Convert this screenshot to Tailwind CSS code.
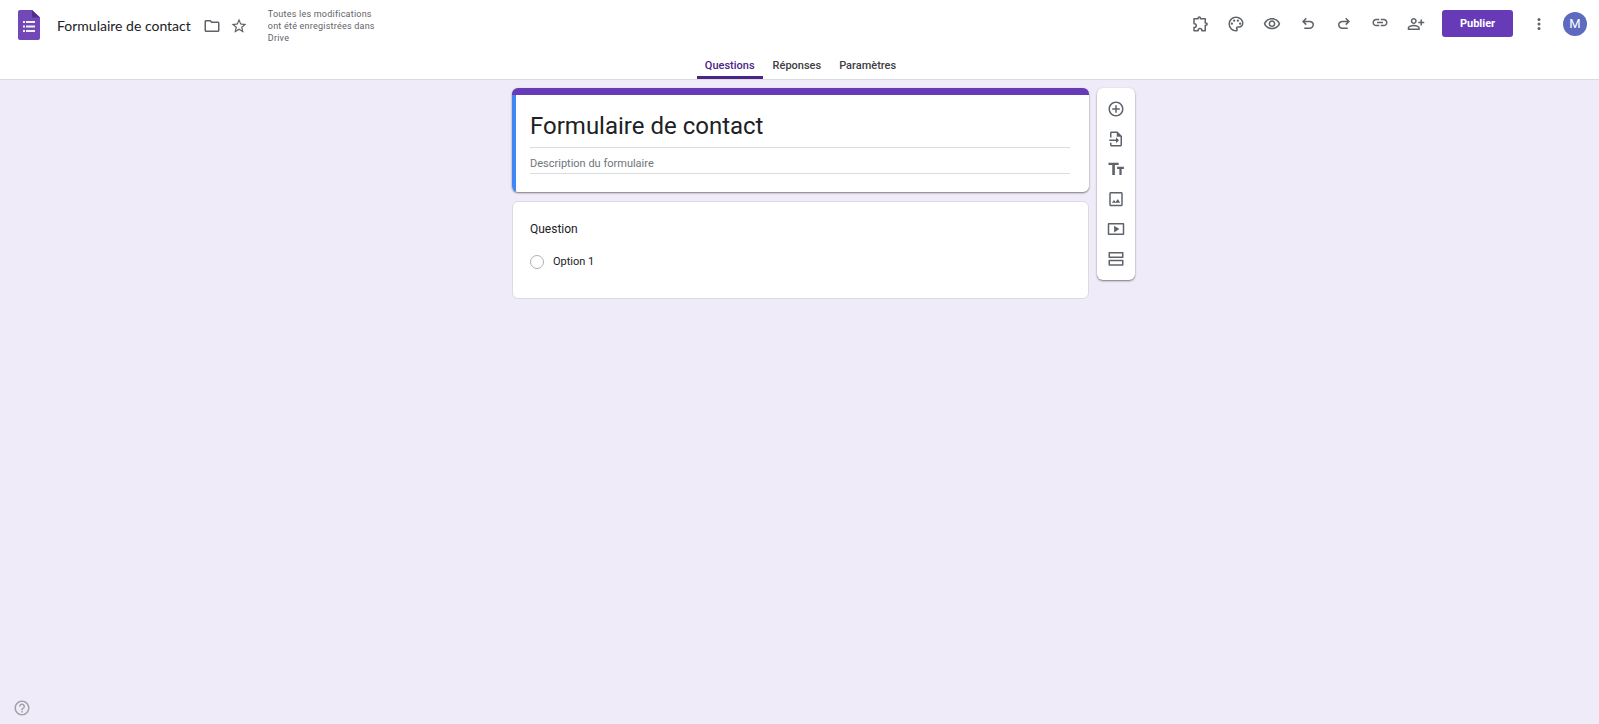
<!DOCTYPE html>
<html lang="fr">

<head>
    <meta charset="UTF-8">
    <meta name="viewport" content="width=device-width, initial-scale=1.0">
    <title>Formulaire de contact</title>
    <script src="https://cdn.jsdelivr.net/npm/@tailwindcss/browser@4"></script>
</head>

<body class="min-h-screen flex flex-col bg-[#f0ebf8] font-['Roboto','Liberation_Sans',sans-serif] text-[#202124]">

    <header class="bg-white border-b border-[#dadce0]">
        <div class="flex justify-between items-start h-[52px] pl-4 pr-3 pt-[10px]">

            <div class="flex items-start">
                <a href="#" aria-label="Accueil Forms" class="px-[2px]">
                    <svg class="w-[22px] h-[30px]" viewBox="0 0 22 30">
                        <path fill="#7248b9" d="M2 0h12l8 7.500v20.500a2 2 0 0 1-2 2H2a2 2 0 0 1-2-2V2a2 2 0 0 1 2-2z" />
                        <path fill="#502d8c" d="M14 0l8 7.500h-6.500a1.500 1.500 0 0 1-1.500-1.500z" />
                        <path fill="#f1f1f1" d="M8 11h9v2H8zM8 15.500h9v2H8zM8 20h9v2H8zM5 11h2v2H5zM5 15.500h2v2H5zM5 20h2v2H5z" />
                    </svg>
                </a>
                <div class="flex items-center h-[31px] pl-[15px]">
                    <h1 class="text-[14px] leading-5 whitespace-nowrap font-['Google_Sans','Lato',sans-serif]">Formulaire de contact</h1>
                    <button type="button" aria-label="Déplacer" class="ml-3 text-[#5f6368]">
                        <svg class="w-[18px] h-[18px]" viewBox="0 0 24 24" fill="currentColor"><path d="M9.170 6l2 2H20v10H4V6h5.170M10 4H4c-1.100 0-1.990.9-1.990 2L2 18c0 1.100.9 2 2 2h16c1.100 0 2-.9 2-2V8c0-1.100-.9-2-2-2h-8l-2-2z" /></svg>
                    </button>
                    <button type="button" aria-label="Suivre" class="ml-[9px] text-[#5f6368]">
                        <svg class="w-[18px] h-[18px]" viewBox="0 0 24 24" fill="currentColor"><path d="M22 9.240l-7.190-.62L12 2 9.190 8.630 2 9.240l5.460 4.730L5.820 21 12 17.270 18.180 21l-1.630-7.030L22 9.240zM12 15.400l-3.760 2.270 1-4.280-3.320-2.880 4.380-.38L12 6.100l1.710 4.040 4.380.38-3.320 2.880 1 4.280L12 15.400z" /></svg>
                    </button>
                </div>
                <p class="ml-5 -mt-[2px] w-[120px] text-[9px] leading-3 tracking-wide text-[#5f6368]">Toutes les modifications ont été enregistrées dans Drive</p>
            </div>

            <div class="flex items-center h-[27px] text-[#5f6368]">
                <button type="button" aria-label="Modules complémentaires" class="w-9 flex justify-center">
                    <svg class="w-[18px] h-[18px]" viewBox="0 0 24 24" fill="none" stroke="currentColor" stroke-width="2" stroke-linejoin="round"><path d="M4 5h5.500V4a1.500 1.500 0 0 1 3 0v1H19v5.500h1a1.500 1.500 0 0 1 0 3h-1V21h-4.500v-.5a2.500 2.500 0 0 0-5 0v.5H4v-4.500h.5a2.500 2.500 0 0 0 0-5H4z" /></svg>
                </button>
                <button type="button" aria-label="Personnaliser le thème" class="w-9 flex justify-center">
                    <svg class="w-[18px] h-[18px]" viewBox="0 0 24 24" fill="currentColor"><path d="M12 22C6.490 22 2 17.510 2 12S6.490 2 12 2s10 4.040 10 9c0 3.310-2.690 6-6 6h-1.770c-.28 0-.5.22-.5.5 0 .12.050.23.130.33.410.47.640 1.060.640 1.670A2.500 2.500 0 0 1 12 22zm0-18c-4.410 0-8 3.590-8 8s3.590 8 8 8c.28 0 .5-.22.5-.5a.54.54 0 0 0-.14-.35c-.41-.46-.63-1.050-.63-1.650a2.500 2.500 0 0 1 2.500-2.500H16c2.210 0 4-1.790 4-4 0-3.860-3.590-7-8-7z" /><circle cx="6.500" cy="11.500" r="1.500" /><circle cx="9.500" cy="7.500" r="1.500" /><circle cx="14.500" cy="7.500" r="1.500" /><circle cx="17.500" cy="11.500" r="1.500" /></svg>
                </button>
                <button type="button" aria-label="Aperçu" class="w-9 flex justify-center">
                    <svg class="w-[18px] h-[18px]" viewBox="0 0 24 24" fill="currentColor"><path d="M12 6c3.790 0 7.170 2.130 8.820 5.500C19.170 14.870 15.790 17 12 17s-7.170-2.130-8.820-5.500C4.830 8.130 8.210 6 12 6m0-2C7 4 2.730 7.110 1 11.500 2.730 15.890 7 19 12 19s9.270-3.110 11-7.500C21.270 7.110 17 4 12 4zm0 5c1.380 0 2.500 1.120 2.500 2.500S13.380 14 12 14s-2.500-1.120-2.500-2.500S10.620 9 12 9m0-2c-2.480 0-4.500 2.020-4.500 4.500S9.520 16 12 16s4.500-2.020 4.500-4.500S14.480 7 12 7z" /></svg>
                </button>
                <button type="button" aria-label="Annuler" class="w-9 flex justify-center">
                    <svg class="w-[18px] h-[18px]" viewBox="0 -940 960 960" fill="currentColor"><path d="M280-200v-80h284q63 0 109.500-40T720-420q0-60-46.500-100T564-560H312l104 104-56 56-200-200 200-200 56 56-104 104h252q97 0 169.500 63T800-420q0 94-72.500 157T564-200H280Z" /></svg>
                </button>
                <button type="button" aria-label="Rétablir" class="w-9 flex justify-center">
                    <svg class="w-[18px] h-[18px]" viewBox="0 -940 960 960" fill="currentColor"><path d="M396-200q-97 0-169.500-63T160-420q0-94 72.500-157T396-640h252L544-744l56-56 200 200-200 200-56-56 104-104H396q-63 0-109.500 40T240-420q0 60 46.500 100T396-280h284v80H396Z" /></svg>
                </button>
                <button type="button" aria-label="Copier le lien" class="w-9 flex justify-center">
                    <svg class="w-[18px] h-[18px]" viewBox="0 2 24 24" fill="currentColor"><path d="M3.900 12c0-1.710 1.390-3.100 3.100-3.100h4V7H7c-2.760 0-5 2.240-5 5s2.240 5 5 5h4v-1.900H7c-1.710 0-3.100-1.390-3.100-3.100zM8 13h8v-2H8v2zm9-6h-4v1.900h4c1.710 0 3.100 1.390 3.100 3.100s-1.390 3.100-3.100 3.100h-4V17h4c2.760 0 5-2.240 5-5s-2.240-5-5-5z" /></svg>
                </button>
                <button type="button" aria-label="Ajouter des éditeurs" class="w-9 flex justify-center">
                    <svg class="w-[18px] h-[18px]" viewBox="0 0 24 24" fill="currentColor"><path d="M9 12c2.210 0 4-1.790 4-4s-1.790-4-4-4-4 1.790-4 4 1.790 4 4 4zm0-6c1.100 0 2 .9 2 2s-.9 2-2 2-2-.9-2-2 .9-2 2-2zm0 7c-2.670 0-8 1.340-8 4v3h16v-3c0-2.660-5.330-4-8-4zm6 5H3v-.99C3.200 16.290 6.300 15 9 15s5.800 1.290 6 2v1zM20 9V6h-2v3h-3v2h3v3h2v-3h3V9z" /></svg>
                </button>
                <button type="button" class="ml-2 h-[27px] w-[71px] pt-px rounded-[3px] bg-[#673ab7] text-white text-[11px] font-bold">Publier</button>
                <button type="button" aria-label="Plus" class="ml-2 w-9 flex justify-center">
                    <svg class="w-[18px] h-[18px]" viewBox="0 0 24 24" fill="currentColor"><circle cx="12" cy="6" r="2" /><circle cx="12" cy="12" r="2" /><circle cx="12" cy="18" r="2" /></svg>
                </button>
                <button type="button" aria-label="Compte" class="ml-[6px] w-6 h-6 rounded-full bg-[#5c6bc0] text-white text-[13px] leading-6">M</button>
            </div>
        </div>

        <nav class="flex justify-center gap-[2px] h-[27px] pl-[2px] text-[11px] font-medium text-[#3c4043]">
            <a href="#" class="px-2 pt-[6px] leading-4 border-b-3 border-[#4a2585] rounded-t-[2px] text-[#4a2585]">Questions</a>
            <a href="#" class="px-2 pt-[6px] leading-4">Réponses</a>
            <a href="#" class="px-2 pt-[6px] leading-4">Paramètres</a>
        </nav>
    </header>

    <main class="flex-1 grid grid-cols-[1fr_minmax(0,577px)_1fr] items-start pt-2 pl-[2px]">
        <div class="col-start-2 flex flex-col gap-[9px]">

            <section class="bg-white rounded-[6px] overflow-hidden border-t-[7px] border-[#673ab7] shadow-[0_1px_2px_rgba(0,0,0,0.5)]">
                <div class="border-l-4 border-[#4285f4] h-[97px] pl-[14px] pr-[19px] pt-[14px]">
                    <input type="text" aria-label="Titre du formulaire" value="Formulaire de contact" class="block w-full h-[39px] pb-1 text-[24px] border-b border-[#dadce0] outline-none">
                    <input type="text" aria-label="Description du formulaire" placeholder="Description du formulaire" class="block w-full h-[20px] mt-[6px] text-[11px] border-b border-[#dadce0] outline-none placeholder:text-[#70757a]">
                </div>
            </section>

            <section class="bg-white rounded-[6px] border border-[#dadce0] h-[98px] px-[17px] pt-[18px]">
                <h2 class="text-[12px] leading-[18px]">Question</h2>
                <label class="flex items-center gap-[9px] mt-[17px] h-[14px] text-[11px]">
                    <input type="radio" name="question" class="appearance-none w-[14px] h-[14px] rounded-full border border-[#b0b0b0]">
                    Option 1
                </label>
            </section>
        </div>

        <aside class="ml-2 w-[38px] py-[6px] flex flex-col bg-white rounded-[6px] text-[#5f6368] shadow-[0_1px_2px_rgba(0,0,0,0.5)]">
            <button type="button" aria-label="Ajouter une question" class="h-[30px] flex justify-center items-center">
                <svg class="w-[18px] h-[18px]" viewBox="0 0 24 24" fill="currentColor"><path d="M13 7h-2v4H7v2h4v4h2v-4h4v-2h-4V7zm-1-5C6.480 2 2 6.480 2 12s4.480 10 10 10 10-4.480 10-10S17.520 2 12 2zm0 18c-4.410 0-8-3.590-8-8s3.590-8 8-8 8 3.590 8 8-3.590 8-8 8z" /></svg>
            </button>
            <button type="button" aria-label="Importer des questions" class="h-[30px] flex justify-center items-center">
                <svg class="w-[18px] h-[18px]" viewBox="0 0 24 24" fill="currentColor"><path d="M14 2H6c-1.100 0-2 .9-2 2v6h2V4h7v5h5v11H6v-3H4v3c0 1.100.9 2 2 2h12c1.100 0 2-.9 2-2V8l-6-6zM12 17.500l4-4-4-4v3H3v2h9z" /></svg>
            </button>
            <button type="button" aria-label="Ajouter un titre et une description" class="h-[30px] flex justify-center items-center">
                <svg class="w-[18px] h-[18px]" viewBox="0 0 24 24" fill="currentColor"><path d="M2 3.500v3h5V20h3.500V6.500h5v-3zM22.500 9h-9v3h3v8h3v-8h3z" /></svg>
            </button>
            <button type="button" aria-label="Ajouter une image" class="h-[30px] flex justify-center items-center">
                <svg class="w-[18px] h-[18px]" viewBox="0 0 24 24" fill="currentColor"><path d="M19 4.500v15H5v-15h14m0-2H5c-1.100 0-2 .9-2 2v15c0 1.100.9 2 2 2h14c1.100 0 2-.9 2-2v-15c0-1.100-.9-2-2-2zM14.500 12l-3 3.900L9.300 13.200 6.500 17h11z" /></svg>
            </button>
            <button type="button" aria-label="Ajouter une vidéo" class="h-[30px] flex justify-center items-center">
                <svg class="w-[18px] h-[18px]" viewBox="0 0 24 24" fill="currentColor"><path d="M9.500 7.500v9l7-4.500z" /><path d="M21.500 4h-19C1.700 4 1 4.700 1 5.500v13c0 .8.7 1.500 1.500 1.500h19c.8 0 1.500-.7 1.500-1.500v-13c0-.8-.7-1.500-1.500-1.500zM21 18H3V6h18v12z" /></svg>
            </button>
            <button type="button" aria-label="Ajouter une section" class="h-[30px] flex justify-center items-center">
                <svg class="w-[18px] h-[18px]" viewBox="0 0 24 24" fill="none" stroke="currentColor" stroke-width="2" stroke-linejoin="round"><path d="M3 3.500h18v6H3zM3 14h18v6H3z" /></svg>
            </button>
        </aside>
    </main>

    <footer class="px-[13px] pb-[7px]">
        <button type="button" aria-label="Aide" class="block text-[#a4a1ab]">
            <svg class="w-[18px] h-[18px]" viewBox="0 0 24 24" fill="currentColor"><path d="M11 18h2v-2h-2v2zm1-16C6.480 2 2 6.480 2 12s4.480 10 10 10 10-4.480 10-10S17.520 2 12 2zm0 18c-4.410 0-8-3.590-8-8s3.590-8 8-8 8 3.590 8 8-3.590 8-8 8zm0-14c-2.210 0-4 1.790-4 4h2c0-1.100.9-2 2-2s2 .9 2 2c0 2-3 1.750-3 5h2c0-2.250 3-2.500 3-5 0-2.210-1.790-4-4-4z" /></svg>
        </button>
    </footer>
</body>

</html>
